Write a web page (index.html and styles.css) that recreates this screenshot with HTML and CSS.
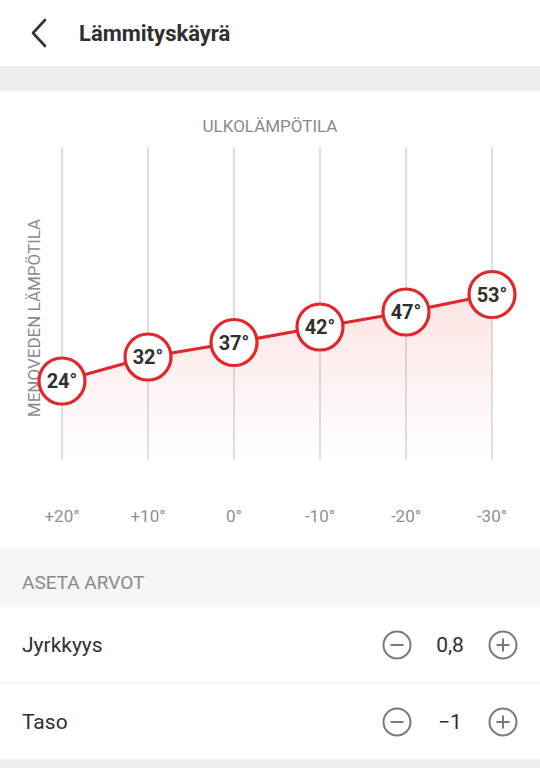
FILE: index.html
```html
<!DOCTYPE html>
<html>
    <head>
        <title>Lämmityskäyrä</title>
        <link rel="stylesheet" href="styles.css">
    </head>
    <body>
        <header class="top-bar">
            <button class="back-btn">
                <svg width="20" height="30" viewBox="0 0 20 30">
                    <path d="M16 2 L4 15 L16 28" fill="none" stroke="#333" stroke-width="2.6" stroke-linecap="round" stroke-linejoin="round"/>
                </svg>
            </button>
            <h1 class="title">Lämmityskäyrä</h1>
        </header>
        <div class="spacer"></div>
        <section class="chart">
            <svg class="chart-svg" width="540" height="456" viewBox="0 0 540 456">
                <defs>
                    <linearGradient id="fade" x1="0" y1="0" x2="0" y2="1">
                        <stop offset="0" stop-color="#e5302b" stop-opacity="0.13"/>
                        <stop offset="1" stop-color="#e5302b" stop-opacity="0"/>
                    </linearGradient>
                </defs>
                <text class="axis-title" x="270" y="41" text-anchor="middle">ULKOLÄMPÖTILA</text>
                <text class="axis-title" transform="translate(40 227) rotate(-90)" text-anchor="middle">MENOVEDEN LÄMPÖTILA</text>

                <g class="grid">
                    <line x1="62" y1="56" x2="62" y2="369"/>
                    <line x1="148" y1="56" x2="148" y2="369"/>
                    <line x1="234" y1="56" x2="234" y2="369"/>
                    <line x1="320" y1="56" x2="320" y2="369"/>
                    <line x1="406" y1="56" x2="406" y2="369"/>
                    <line x1="492" y1="56" x2="492" y2="369"/>
                </g>

                <path d="M62 290 L148 266 L234 251.5 L320 236 L406 221 L492 203.5 L492 369 L62 369 Z" fill="url(#fade)"/>
                <polyline class="curve" points="62,290 148,266 234,251.5 320,236 406,221 492,203.5"/>

                <g class="point">
                    <circle cx="62" cy="290" r="23"/>
                    <text x="62" y="297" text-anchor="middle">24°</text>
                </g>
                <g class="point">
                    <circle cx="148" cy="266" r="23"/>
                    <text x="148" y="273" text-anchor="middle">32°</text>
                </g>
                <g class="point">
                    <circle cx="234" cy="251.5" r="23"/>
                    <text x="234" y="258.5" text-anchor="middle">37°</text>
                </g>
                <g class="point">
                    <circle cx="320" cy="236" r="23"/>
                    <text x="320" y="243" text-anchor="middle">42°</text>
                </g>
                <g class="point">
                    <circle cx="406" cy="221" r="23"/>
                    <text x="406" y="228" text-anchor="middle">47°</text>
                </g>
                <g class="point">
                    <circle cx="492" cy="203.5" r="23"/>
                    <text x="492" y="210.5" text-anchor="middle">53°</text>
                </g>

                <g class="x-labels">
                    <text x="62" y="431" text-anchor="middle">+20°</text>
                    <text x="148" y="431" text-anchor="middle">+10°</text>
                    <text x="234" y="431" text-anchor="middle">0°</text>
                    <text x="320" y="431" text-anchor="middle">-10°</text>
                    <text x="406" y="431" text-anchor="middle">-20°</text>
                    <text x="492" y="431" text-anchor="middle">-30°</text>
                </g>
            </svg>
        </section>
        <section class="settings">
            <h2 class="section-title">ASETA ARVOT</h2>
            <div class="setting-row">
                <span class="setting-name">Jyrkkyys</span>
                <div class="stepper">
                    <button class="step-btn">
                        <svg width="30" height="30" viewBox="0 0 30 30">
                            <circle cx="15" cy="15" r="13.5" fill="none" stroke="#7a7a7a" stroke-width="2"/>
                            <line x1="8.5" y1="15" x2="21.5" y2="15" stroke="#7a7a7a" stroke-width="2"/>
                        </svg>
                    </button>
                    <span class="step-value">0,8</span>
                    <button class="step-btn">
                        <svg width="30" height="30" viewBox="0 0 30 30">
                            <circle cx="15" cy="15" r="13.5" fill="none" stroke="#7a7a7a" stroke-width="2"/>
                            <line x1="8.5" y1="15" x2="21.5" y2="15" stroke="#7a7a7a" stroke-width="2"/>
                            <line x1="15" y1="8.5" x2="15" y2="21.5" stroke="#7a7a7a" stroke-width="2"/>
                        </svg>
                    </button>
                </div>
            </div>
            <div class="setting-row">
                <span class="setting-name">Taso</span>
                <div class="stepper">
                    <button class="step-btn">
                        <svg width="30" height="30" viewBox="0 0 30 30">
                            <circle cx="15" cy="15" r="13.5" fill="none" stroke="#7a7a7a" stroke-width="2"/>
                            <line x1="8.5" y1="15" x2="21.5" y2="15" stroke="#7a7a7a" stroke-width="2"/>
                        </svg>
                    </button>
                    <span class="step-value">−1</span>
                    <button class="step-btn">
                        <svg width="30" height="30" viewBox="0 0 30 30">
                            <circle cx="15" cy="15" r="13.5" fill="none" stroke="#7a7a7a" stroke-width="2"/>
                            <line x1="8.5" y1="15" x2="21.5" y2="15" stroke="#7a7a7a" stroke-width="2"/>
                            <line x1="15" y1="8.5" x2="15" y2="21.5" stroke="#7a7a7a" stroke-width="2"/>
                        </svg>
                    </button>
                </div>
            </div>
        </section>
        <div class="bottom-band"></div>
    </body>
</html>
```

FILE: styles.css
```css
body{
    margin: 0;
    font-family: Roboto, "Liberation Sans", sans-serif;
    background-color: white;
    width: 540px;
}
.top-bar{
    height: 66px;
    display: flex;
    flex-direction: row;
    align-items: center;
}
.back-btn{
    background: none;
    border: none;
    padding: 0;
    margin-left: 29px;
    width: 20px;
    height: 30px;
    display: flex;
    cursor: pointer;
}
.title{
    margin: 0 0 0 30px;
    font-size: 22px;
    font-weight: 700;
    color: #2f2f2f;
}
.spacer{
    height: 25px;
    background-color: #eeeff1;
}
.chart{
    height: 456px;
}
.chart-svg{
    display: block;
    font-family: Roboto, "Liberation Sans", sans-serif;
}
.axis-title{
    font-size: 17px;
    fill: #8a8a8a;
}
.grid line{
    stroke: #d6d6d6;
    stroke-width: 1.5;
}
.curve{
    fill: none;
    stroke: #e3262a;
    stroke-width: 3.2;
}
.point circle{
    fill: white;
    stroke: #e3262a;
    stroke-width: 3.2;
}
.point text{
    font-size: 20px;
    font-weight: 700;
    fill: #303030;
}
.x-labels text{
    font-size: 17px;
    fill: #8f8f8f;
}
.settings{
    background-color: #f5f5f5;
}
.section-title{
    box-sizing: border-box;
    margin: 0;
    height: 60px;
    padding: 10px 0 0 22px;
    display: flex;
    align-items: center;
    font-size: 19px;
    font-weight: 400;
    color: #8a8a8a;
}
.setting-row{
    height: 75px;
    background-color: white;
    display: flex;
    flex-direction: row;
    align-items: center;
    justify-content: space-between;
    padding: 0 22px 0 22px;
}
.setting-row + .setting-row{
    margin-top: 2px;
}
.setting-name{
    font-size: 21px;
    color: #2f2f2f;
}
.stepper{
    display: flex;
    flex-direction: row;
    align-items: center;
}
.step-btn{
    background: none;
    border: none;
    padding: 0;
    width: 30px;
    height: 30px;
    display: flex;
    cursor: pointer;
}
.step-value{
    width: 76px;
    text-align: center;
    font-size: 21px;
    color: #2f2f2f;
}
.bottom-band{
    height: 10px;
    background-color: #eeeff1;
}
```
